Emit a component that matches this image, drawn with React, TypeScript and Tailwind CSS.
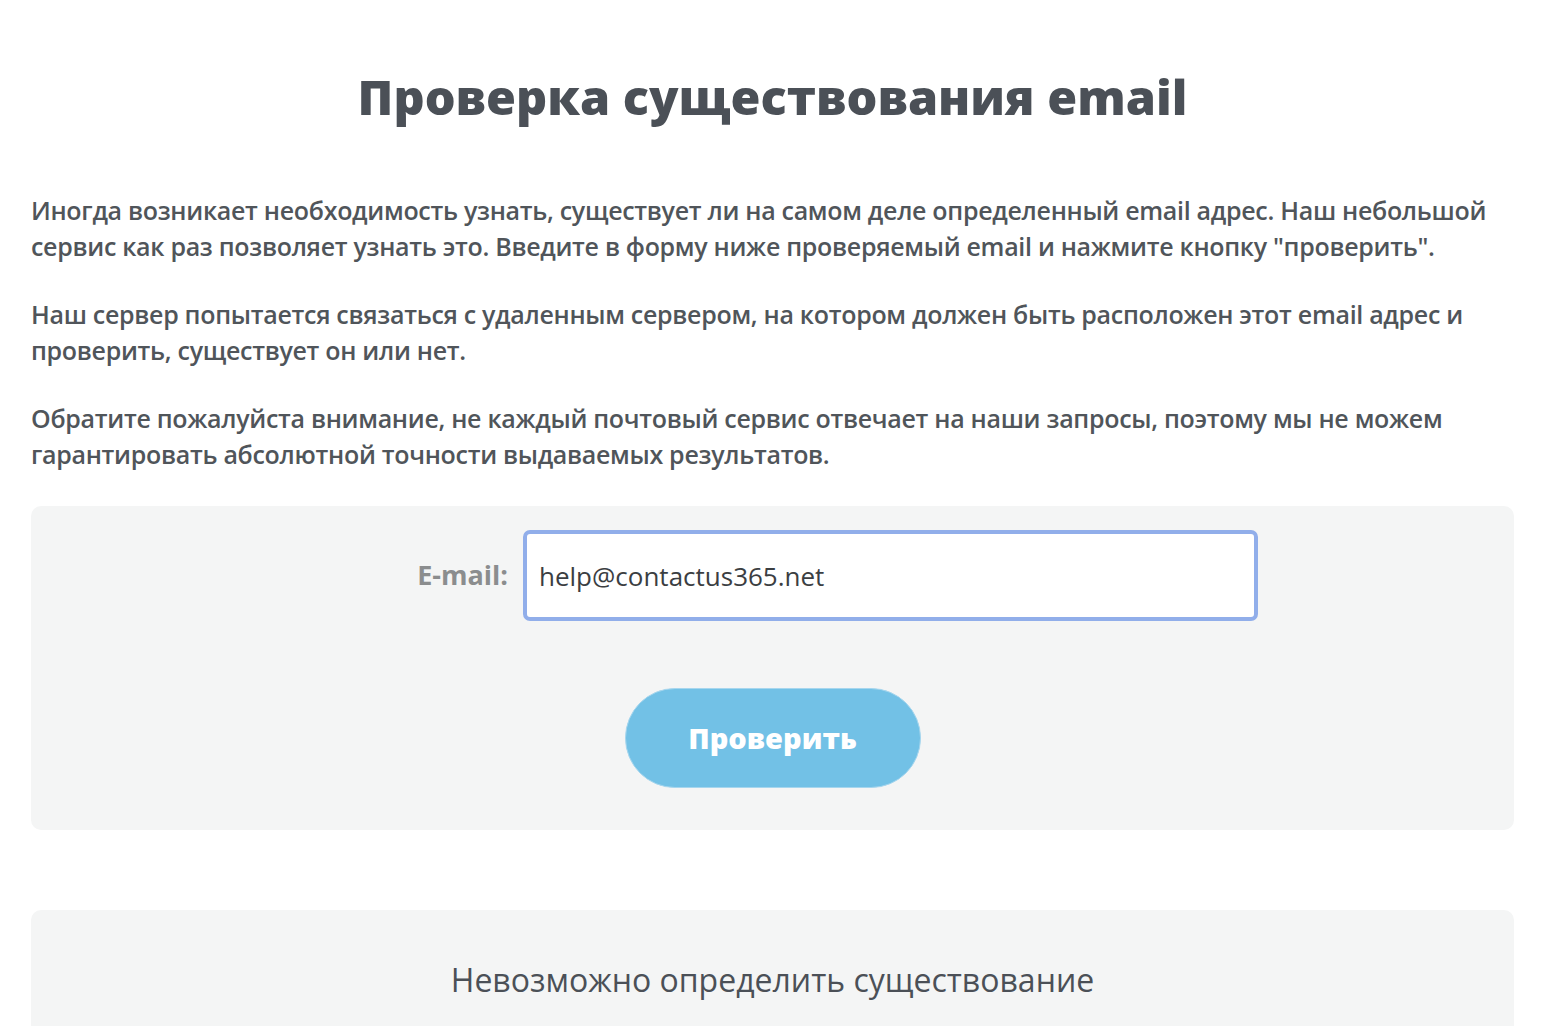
import React, { useState } from 'react';

const bodyFont = { fontFamily: '"Open Sans", "Liberation Sans", sans-serif' };

const paragraphs = [
  [
    'Иногда возникает необходимость узнать, существует ли на самом деле определенный email адрес. Наш небольшой',
    'сервис как раз позволяет узнать это. Введите в форму ниже проверяемый email и нажмите кнопку "проверить".',
  ],
  [
    'Наш сервер попытается связаться с удаленным сервером, на котором должен быть расположен этот email адрес и',
    'проверить, существует он или нет.',
  ],
  [
    'Обратите пожалуйста внимание, не каждый почтовый сервис отвечает на наши запросы, поэтому мы не можем',
    'гарантировать абсолютной точности выдаваемых результатов.',
  ],
];

const App = () => {
  const [email, setEmail] = useState('help@contactus365.net');

  return (
    <div className="min-h-screen bg-white" style={bodyFont}>
      <div className="ml-[31px] w-[1483px] pt-[66px]">
        <h1 className="text-center text-[48.5px] font-extrabold leading-[60px] text-[#4b5057]">
          Проверка существования email
        </h1>

        <div className="mt-[66px] flex flex-col gap-8">
          {paragraphs.map((lines, i) => (
            <p
              key={i}
              className="whitespace-nowrap text-[25px] font-semibold leading-[36px] tracking-[-0.3px] text-[#50555a]"
            >
              {lines[0]}
              <br />
              {lines[1]}
            </p>
          ))}
        </div>

        <div className="mt-[34px] flex flex-col rounded-[10px] bg-[#f4f5f5] pb-[42px] pt-6">
          <div className="flex items-center gap-[15px]">
            <label className="w-[477px] text-right text-[27px] font-bold text-[#8b8d8e]">E-mail:</label>
            <input
              value={email}
              onChange={(e) => setEmail(e.target.value)}
              className="h-[91px] w-[735px] rounded-[7px] border-4 border-[#91aeea] bg-white px-3 text-[26px] text-[#3b3e42] outline-none"
            />
          </div>
          <button className="mx-auto mt-[67px] h-[100px] w-[296px] rounded-full border border-[#a6d6ee] bg-[#72c1e6] text-[29px] font-extrabold text-white">
            Проверить
          </button>
        </div>

        <div className="mt-20 rounded-t-[10px] bg-[#f4f5f5] pb-10 pt-[46px] text-center">
          <p className="text-[32px] font-medium text-[#4b5057]">
            Невозможно определить существование
          </p>
        </div>
      </div>
    </div>
  );
};

export default App;
